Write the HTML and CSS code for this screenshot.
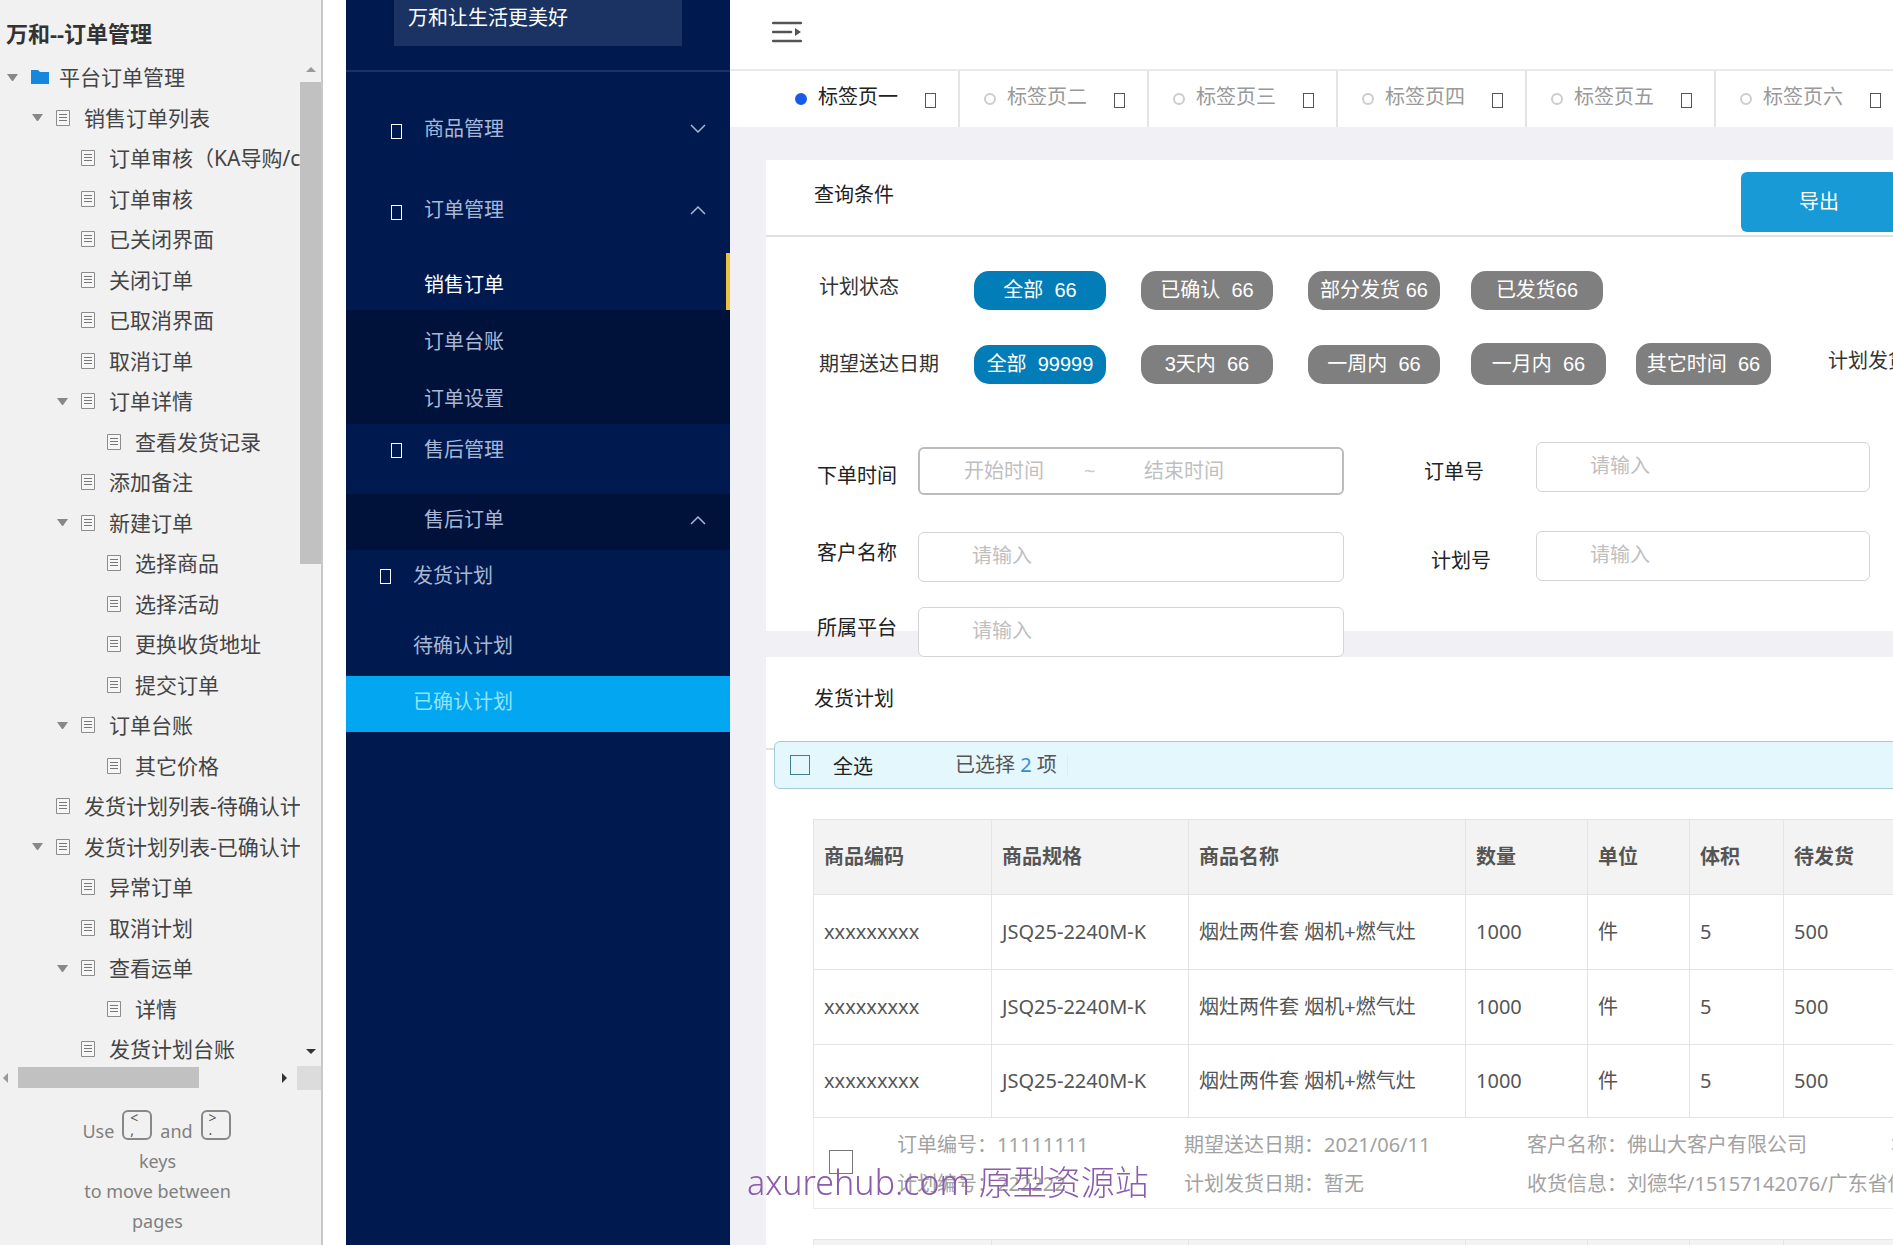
FILE: index.html
```html
<!DOCTYPE html>
<html lang="zh-CN">
<head>
<meta charset="utf-8">
<title>万和--订单管理</title>
<link rel="stylesheet" href="styles.css">
</head>
<body>
<svg class="sprite" aria-hidden="true">
  <symbol id="doc" viewBox="0 0 14 16" preserveAspectRatio="xMinYMid meet"><path d="M.5.5h13v15H.5z" fill="#f6f6f6" stroke="#8c8c8c"/><path d="M3 4.500h8M3 7.500h8M3 10.500h8" stroke="#777"/></symbol>
  <symbol id="folder" viewBox="0 0 18 16"><path d="M0 1h7l2 2h9v12H0z" fill="#1488dc"/></symbol>
  <symbol id="down" viewBox="0 0 16 10"><path d="M1 1l7 7 7-7" fill="none" stroke="#a9b7d6" stroke-width="1.500"/></symbol>
  <symbol id="up" viewBox="0 0 16 10"><path d="M1 9l7-7 7 7" fill="none" stroke="#a9b7d6" stroke-width="1.500"/></symbol>
</svg>

<div class="app">
  <aside class="sitemap">
    <h1 class="sitemap-title">万和--订单管理</h1>
    <div class="tree-pane">
      <ul class="tree">
        <li><i class="toggle open"></i><svg class="ico"><use href="#folder"/></svg><a href="#">平台订单管理</a></li>
        <li class="l1"><i class="toggle open"></i><svg class="ico"><use href="#doc"/></svg><a href="#">销售订单列表</a></li>
        <li class="l2"><i class="toggle"></i><svg class="ico"><use href="#doc"/></svg><a href="#">订单审核（KA导购/c</a></li>
        <li class="l2"><i class="toggle"></i><svg class="ico"><use href="#doc"/></svg><a href="#">订单审核</a></li>
        <li class="l2"><i class="toggle"></i><svg class="ico"><use href="#doc"/></svg><a href="#">已关闭界面</a></li>
        <li class="l2"><i class="toggle"></i><svg class="ico"><use href="#doc"/></svg><a href="#">关闭订单</a></li>
        <li class="l2"><i class="toggle"></i><svg class="ico"><use href="#doc"/></svg><a href="#">已取消界面</a></li>
        <li class="l2"><i class="toggle"></i><svg class="ico"><use href="#doc"/></svg><a href="#">取消订单</a></li>
        <li class="l2"><i class="toggle open"></i><svg class="ico"><use href="#doc"/></svg><a href="#">订单详情</a></li>
        <li class="l3"><i class="toggle"></i><svg class="ico"><use href="#doc"/></svg><a href="#">查看发货记录</a></li>
        <li class="l2"><i class="toggle"></i><svg class="ico"><use href="#doc"/></svg><a href="#">添加备注</a></li>
        <li class="l2"><i class="toggle open"></i><svg class="ico"><use href="#doc"/></svg><a href="#">新建订单</a></li>
        <li class="l3"><i class="toggle"></i><svg class="ico"><use href="#doc"/></svg><a href="#">选择商品</a></li>
        <li class="l3"><i class="toggle"></i><svg class="ico"><use href="#doc"/></svg><a href="#">选择活动</a></li>
        <li class="l3"><i class="toggle"></i><svg class="ico"><use href="#doc"/></svg><a href="#">更换收货地址</a></li>
        <li class="l3"><i class="toggle"></i><svg class="ico"><use href="#doc"/></svg><a href="#">提交订单</a></li>
        <li class="l2"><i class="toggle open"></i><svg class="ico"><use href="#doc"/></svg><a href="#">订单台账</a></li>
        <li class="l3"><i class="toggle"></i><svg class="ico"><use href="#doc"/></svg><a href="#">其它价格</a></li>
        <li class="l1"><i class="toggle"></i><svg class="ico"><use href="#doc"/></svg><a href="#">发货计划列表-待确认计</a></li>
        <li class="l1"><i class="toggle open"></i><svg class="ico"><use href="#doc"/></svg><a href="#">发货计划列表-已确认计</a></li>
        <li class="l2"><i class="toggle"></i><svg class="ico"><use href="#doc"/></svg><a href="#">异常订单</a></li>
        <li class="l2"><i class="toggle"></i><svg class="ico"><use href="#doc"/></svg><a href="#">取消计划</a></li>
        <li class="l2"><i class="toggle open"></i><svg class="ico"><use href="#doc"/></svg><a href="#">查看运单</a></li>
        <li class="l3"><i class="toggle"></i><svg class="ico"><use href="#doc"/></svg><a href="#">详情</a></li>
        <li class="l2"><i class="toggle"></i><svg class="ico"><use href="#doc"/></svg><a href="#">发货计划台账</a></li>
      </ul>
      <div class="vbar"><i class="arrow arrow-up"></i><i class="vthumb"></i><i class="arrow arrow-down"></i></div>
    </div>
    <div class="hbar"><i class="arrow arrow-left"></i><i class="hthumb"></i><i class="arrow arrow-right"></i><i class="corner"></i></div>
    <div class="hint">
      <div class="hint-keys"><span>Use</span><kbd>&lt;<br>,</kbd><span>and</span><kbd>&gt;<br>.</kbd></div>
      <div>keys</div><div>to move between</div><div>pages</div>
    </div>
  </aside>

  <nav class="nav">
    <div class="brand"><div class="brand-box">万和让生活更美好</div></div>
    <a class="item tall" href="#"><i class="glyph"></i><span>商品管理</span><svg class="chev"><use href="#down"/></svg></a>
    <a class="item tall" href="#"><i class="glyph"></i><span>订单管理</span><svg class="chev"><use href="#up"/></svg></a>
    <a class="item sub current" href="#">销售订单</a>
    <a class="item sub dark" href="#">订单台账</a>
    <a class="item sub dark" href="#">订单设置</a>
    <a class="item group" href="#"><i class="glyph"></i><span>售后管理</span></a>
    <a class="item child dark" href="#"><span>售后订单</span><svg class="chev"><use href="#up"/></svg></a>
    <a class="item group outer" href="#"><i class="glyph"></i><span>发货计划</span></a>
    <a class="item child outer" href="#">待确认计划</a>
    <a class="item child outer active" href="#">已确认计划</a>
  </nav>

  <main class="main">
    <header class="topbar">
      <button class="burger" type="button" aria-label="菜单"><svg viewBox="0 0 30 22"><path d="M1 2h28M1 11h18M1 20h28" stroke="#555" stroke-width="2.500" stroke-linecap="round"/><path d="M23 7l6 4-6 4z" fill="#555"/></svg></button>
    </header>
    <div class="tabs">
      <a class="tab on" href="#"><i class="dot"></i><span>标签页一</span><i class="glyph"></i></a>
      <a class="tab" href="#"><i class="dot"></i><span>标签页二</span><i class="glyph"></i></a>
      <a class="tab" href="#"><i class="dot"></i><span>标签页三</span><i class="glyph"></i></a>
      <a class="tab" href="#"><i class="dot"></i><span>标签页四</span><i class="glyph"></i></a>
      <a class="tab" href="#"><i class="dot"></i><span>标签页五</span><i class="glyph"></i></a>
      <a class="tab" href="#"><i class="dot"></i><span>标签页六</span><i class="glyph"></i></a>
    </div>

    <section class="card">
      <div class="card-head"><h2>查询条件</h2><button class="export" type="button">导出</button></div>
      <div class="filters">
        <span class="caption">计划状态</span>
        <button class="chip on" type="button">全部&nbsp; 66</button>
        <button class="chip" type="button">已确认&nbsp; 66</button>
        <button class="chip" type="button">部分发货 66</button>
        <button class="chip" type="button">已发货66</button>
      </div>
      <div class="filters">
        <span>期望送达日期</span>
        <button class="chip on" type="button">全部&nbsp; 99999</button>
        <button class="chip" type="button">3天内&nbsp; 66</button>
        <button class="chip" type="button">一周内&nbsp; 66</button>
        <button class="chip wide" type="button">一月内&nbsp; 66</button>
        <button class="chip wide" type="button">其它时间&nbsp; 66</button>
        <span class="caption">计划发货</span>
      </div>
      <form class="form">
        <div class="stack stack-left">
          <div class="field"><label class="low" for="from">下单时间</label>
            <div class="range"><input id="from" placeholder="开始时间"><span>~</span><input aria-label="结束时间" placeholder="结束时间"></div></div>
          <div class="field"><label class="high" for="cust">客户名称</label><input class="box" id="cust" placeholder="请输入"></div>
          <div class="field"><label class="high" for="plat">所属平台</label><input class="box" id="plat" placeholder="请输入"></div>
        </div>
        <div class="stack stack-right">
          <div class="field"><label class="low" for="order">订单号</label><input class="box" id="order" placeholder="请输入"></div>
          <div class="field inset"><label class="low" for="plan">计划号</label><input class="box" id="plan" placeholder="请输入"></div>
        </div>
      </form>
    </section>

    <section class="card plans">
      <div class="card-head list-head"><h2>发货计划</h2></div>
      <div class="selection">
        <input type="checkbox" id="all" class="check"><label for="all">全选</label>
        <span class="count">已选择 <b>2</b> 项</span>
      </div>
      <div class="order">
        <table>
          <colgroup><col class="c1"><col class="c2"><col class="c3"><col class="c4"><col class="c5"><col class="c6"><col></colgroup>
          <thead><tr><th>商品编码</th><th>商品规格</th><th>商品名称</th><th>数量</th><th>单位</th><th>体积</th><th>待发货</th></tr></thead>
          <tbody>
            <tr><td>xxxxxxxxx</td><td>JSQ25-2240M-K</td><td>烟灶两件套 烟机+燃气灶</td><td>1000</td><td>件</td><td>5</td><td>500</td></tr>
            <tr><td>xxxxxxxxx</td><td>JSQ25-2240M-K</td><td>烟灶两件套 烟机+燃气灶</td><td>1000</td><td>件</td><td>5</td><td>500</td></tr>
            <tr><td>xxxxxxxxx</td><td>JSQ25-2240M-K</td><td>烟灶两件套 烟机+燃气灶</td><td>1000</td><td>件</td><td>5</td><td>500</td></tr>
          </tbody>
        </table>
        <div class="info">
          <input type="checkbox" class="check big" aria-label="选择计划">
          <div class="info-col"><span>订单编号：11111111</span><span>计划编号：222222</span></div>
          <div class="info-col"><span>期望送达日期：2021/06/11</span><span>计划发货日期：暂无</span></div>
          <div class="info-col"><span>客户名称：佛山大客户有限公司</span><span>收货信息：刘德华/15157142076/广东省佛</span></div>
          <div class="info-col"><span>本</span></div>
        </div>
      </div>
      <div class="order">
        <table>
          <colgroup><col class="c1"><col class="c2"><col class="c3"><col class="c4"><col class="c5"><col class="c6"><col></colgroup>
          <thead><tr><th></th><th></th><th></th><th></th><th></th><th></th><th></th></tr></thead>
        </table>
      </div>
    </section>
  </main>
</div>
<div class="watermark">axurehub.com 原型资源站</div>
</body>
</html>
```
FILE: styles.css
```css
* { box-sizing: border-box; }
body {
  margin: 0;
  height: 100vh;
  overflow: hidden;
  background: #fff;
  font: 20px/30px "Noto Sans", "Noto Sans CJK SC", sans-serif;
  color: #333;
}
a { color: inherit; text-decoration: none; white-space: nowrap; }
h1, h2, ul { margin: 0; padding: 0; font-weight: 400; }
ul { list-style: none; }
button, input { font: inherit; margin: 0; }
label, span { white-space: nowrap; }
.sprite { position: absolute; width: 0; height: 0; }
.app { display: flex; height: 100%; }

/* Page tree */
.sitemap {
  flex: 0 0 323px;
  margin-right: 23px;
  background: #f1f1f1;
  border-right: 2px solid #c8c8c8;
  overflow: hidden;
}
.sitemap-title { padding: 18px 0 9px 6px; font-size: 22px; font-weight: 700; line-height: 30px; color: #333; }
.tree-pane { display: flex; height: 1010px; }
.tree { flex: 1; overflow: hidden; font-size: 21px; color: #444; }
.tree li { display: flex; align-items: center; height: 40px; padding-left: 7px; }
.tree li:nth-child(even) { height: 41px; }
.tree .l1 { padding-left: 32px; }
.tree .l2 { padding-left: 57px; }
.tree .l3 { padding-left: 83px; }
.toggle { flex: none; width: 11px; margin-right: 13px; }
.toggle.open { border: 5px solid transparent; border-top: 7px solid #888; border-bottom: 0; }
.ico { flex: none; width: 18px; height: 16px; margin-right: 10px; }
.vbar { display: flex; flex-direction: column; align-items: center; width: 21px; padding-top: 10px; }
.arrow { flex: none; border: 5px solid transparent; }
.arrow-up { border-top: 0; border-bottom-color: #999; }
.arrow-down { border-bottom: 0; border-top-color: #333; margin: auto 0 13px; }
.vthumb { width: 21px; height: 482px; margin-top: 10px; background: #c1c1c1; }
.hbar { display: flex; align-items: center; height: 21px; }
.arrow-left { border-left: 0; border-right-color: #999; margin: 0 10px 0 3px; }
.hthumb { width: 181px; height: 21px; background: #c1c1c1; }
.arrow-right { border-right: 0; border-left-color: #333; margin: 0 10px 0 auto; }
.corner { width: 24px; height: 24px; background: #dcdcdc; }
.hint { margin-top: 18px; padding-right: 6px; text-align: center; font-size: 18px; line-height: 30px; color: #808080; }
.hint-keys { display: flex; justify-content: center; gap: 8px; height: 40px; padding-right: 2px; }
.hint-keys span { padding-top: 10px; }
kbd { width: 30px; height: 30px; margin-top: 4px; padding-left: 6px; border: 2px solid #888; border-radius: 6px; text-align: left; font: 14px/12px "Noto Sans", sans-serif; color: #555; }

/* Product menu */
.nav { flex: 0 0 384px; background: #001a50; color: #a9b7d6; }
.brand { height: 72px; margin-bottom: 16px; padding: 0 48px; border-bottom: 2px solid #1a3362; }
.brand-box { height: 46px; padding: 3px 14px; background: #1a3362; color: #fff; }
.item { display: flex; align-items: center; padding: 0 24px 0 78px; }
.item .glyph { margin: 5px 22px 0 -33px; border-color: #fff; }
.item.group .glyph { margin-top: 0; }
.glyph { flex: none; width: 11px; height: 15px; border: 1px solid #555; }
.chev { width: 16px; height: 10px; margin-left: auto; }
.tall { height: 81px; }
.sub { height: 57px; padding-top: 7px; }
.current { position: relative; margin-top: 3px; color: #fff; }
.current::after { content: ""; position: absolute; right: 0; top: 0; width: 4px; height: 57px; background: #f0c040; }
.dark { background: #00123a; }
.group { height: 70px; padding-bottom: 18px; }
.child { height: 56px; padding-bottom: 4px; }
.outer { padding-left: 67px; }
.active { background: #03a6f0; color: #8fe4fb; }

/* Workspace */
.main { flex: 1; min-width: 0; overflow: hidden; background: #f0f0f5; }
.topbar { height: 71px; padding: 21px 42px; background: #fff; border-bottom: 2px solid #eaeaea; }
.burger { display: block; width: 30px; height: 22px; padding: 0; border: 0; background: none; }
.burger svg { display: block; }
.tabs { display: flex; height: 56px; padding-left: 41px; background: #fff; }
.tab { flex: 0 0 189px; display: flex; align-items: center; padding: 0 20px 4px 24px; border-right: 2px solid #e4e4e4; color: #999; }
.tab.on { color: #222; }
.dot { flex: none; width: 12px; height: 12px; margin: 4px 11px 0 0; border: 2px solid #ccc; border-radius: 50%; }
.tab.on .dot { border-color: #1a5ae8; background: #1a5ae8; }
.tab .glyph { margin: 6px 0 0 27px; }
.card { display: flex; flex-direction: column; margin: 33px 0 0 36px; background: #fff; }
.card-head { display: flex; justify-content: space-between; height: 77px; padding: 12px 0 0 48px; border-bottom: 2px solid #e0e0e0; }
.card-head h2 { padding-top: 8px; font-size: 20px; line-height: 30px; color: #222; }
.export { width: 156px; height: 60px; margin-right: -4px; border: 0; border-radius: 6px; background: #189ad6; color: #fff; }
.filters {
  display: grid;
  grid-template-columns: 155px 167px 167px 163px 165px 192px auto;
  align-items: center;
  height: 42px;
  margin: 32px 0 0 53px;
}
.filters + .filters { margin-top: 32px; }
.chip { width: 132px; height: 39px; padding: 0; border: 0; border-radius: 15px; background: #7f7f7f; color: #fff; font-family: "Liberation Sans", "Noto Sans CJK SC", sans-serif; }
.chip.wide { width: 135px; height: 42px; }
.chip.on { background: #037db8; }
.caption { padding-bottom: 6px; }
.form { display: flex; margin: 57px 0 -26px 51px; color: #222; }
.stack-left { padding-top: 5px; }
.stack-right { margin-left: 80px; }
.field { display: flex; align-items: center; height: 50px; margin-bottom: 25px; }
.field:first-child { height: 48px; margin-bottom: 37px; }
.field:last-child { margin-bottom: 0; }
.stack-right .field:first-child { height: 50px; margin-bottom: 39px; }
.stack-left label { width: 101px; }
.stack-right label { width: 112px; }
.stack-right .inset label { padding-left: 7px; }
.low { padding-top: 10px; }
.high { padding-bottom: 8px; }
.box, .range { width: 426px; height: 50px; border: 1px solid #d4d4d4; border-radius: 6px; background: #fff; }
.box { padding: 0 0 4px 53px; }
.stack-right .box { width: 334px; }
.range { display: flex; align-items: center; height: 48px; padding-left: 44px; border: 2px solid #bbb; color: #ccc; }
.range input { width: 120px; padding: 0; border: 0; background: none; }
.range span { width: 60px; }
::placeholder { color: #bfbfbf; opacity: 1; }

/* Delivery plans */
.plans { min-height: 588px; margin-top: 26px; }
.list-head { height: 93px; padding-top: 19px; }
.selection { display: flex; align-items: center; position: relative; height: 48px; margin: -9px -8px 0 8px; padding-left: 15px; background: #e4f7fd; border: 1px solid #a6cbd6; border-radius: 6px; color: #222; }
.check { appearance: none; flex: none; width: 20px; height: 20px; border: 1px solid #3f7f92; }
.selection label { width: 122px; margin-left: 23px; padding-top: 4px; }
.count { padding-right: 10px; color: #555; border-right: 1px solid #d8eef5; line-height: 20px; }
.count b { color: #2f8fd6; font-weight: 400; }
.order { margin: 30px 0 0 47px; }
table { width: 100%; table-layout: fixed; border-collapse: collapse; color: #555; }
th, td { height: 75px; padding: 0 0 0 10px; border: 1px solid #e4e4e4; border-width: 1px 0 1px 1px; text-align: left; white-space: nowrap; }
tbody tr:last-child td { height: 73px; }
th { background: #f3f3f3; font-weight: 700; }
.c1 { width: 178px; } .c2 { width: 197px; } .c3 { width: 277px; } .c4 { width: 122px; } .c5 { width: 102px; } .c6 { width: 94px; }
.info { display: grid; grid-template-columns: 68px 287px 343px 364px auto; height: 91px; padding: 12px 0 0 15px; border: 1px solid #ececec; border-width: 0 0 1px 1px; color: #a2a2a2; }
.info-col { display: flex; flex-direction: column; gap: 9px; }
.big { width: 24px; height: 24px; margin-top: 20px; border-color: #777; }

.watermark { position: fixed; left: 747px; top: 1160px; font-size: 34px; line-height: 44px; font-weight: 300; color: #8a5cab; white-space: nowrap; }
```
